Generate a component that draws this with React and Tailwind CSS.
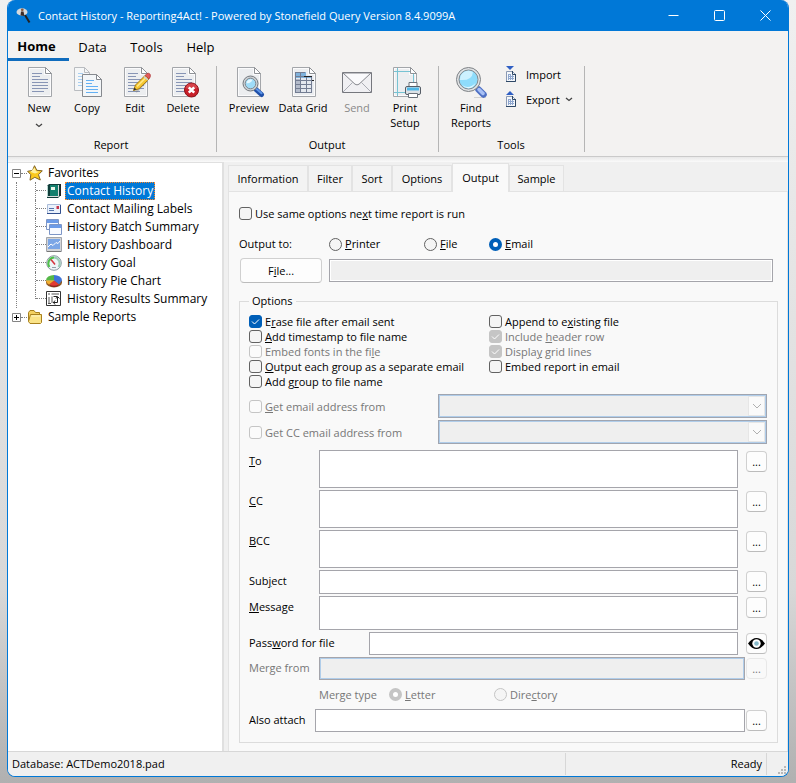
import { useState } from 'react';
import clsx from 'clsx';

/* ---------- Icons ---------- */

function Sheet({ x = 0, lines = true }) {
  return (
    <g transform={`translate(${x} 0)`}>
      <path d="M.5 .5H17.5L23.5 6.5V29.5H.5Z" fill="#fbfbfc" stroke="#a3a6aa" />
      <path d="M2 2H16V8H22V28H2Z" fill="#eceef0" />
      <path d="M17.5 .5V6.5H23.5Z" fill="#fff" stroke="#8f9296" />
      {lines && <path d="M4 6.5H14M4 9.5H12M4 12.5H20M4 15.5H20M4 18.5H20M4 21.5H20M4 24.5H16" stroke="#8795b5" />}
    </g>
  );
}

const Svg32 = ({ children }) => (
  <svg width="32" height="32" viewBox="0 0 32 32" fill="none" aria-hidden="true">{children}</svg>
);

const NewIcon = () => <Svg32><Sheet x={5} /></Svg32>;

const CopyIcon = () => (
  <Svg32>
    <g transform="translate(3 0)">
      <path d="M.5 .5H10.5L15.5 5.5V23.5H.5Z" fill="#f5f7f8" stroke="#b9bcc0" />
      <path d="M10.5 .5V5.5H15.5" stroke="#b9bcc0" />
      <path d="M4 6.5H9M4 9.5H11M4 12.5H11M4 15.5H11M4 18.5H11" stroke="#a9cff0" />
    </g>
    <g transform="translate(11 7)">
      <path d="M.5 .5H14.5L19.5 5.5V22.5H.5Z" fill="#f3f6f8" stroke="#85898e" />
      <path d="M14.5 .5V5.5H19.5Z" fill="#fff" stroke="#85898e" />
      <path d="M4 6.5H12M4 9.5H10M4 12.5H16M4 15.5H16M4 18.5H16" stroke="#63b0f3" />
    </g>
  </Svg32>
);

const EditIcon = () => (
  <Svg32>
    <Sheet x={5} />
    <path d="M17 25L28 14" stroke="#777" strokeWidth="2" opacity=".4" />
    <path d="M14.5 23.5L16.5 18L26 8.5L30 12L20 21.8Z" fill="#f6c832" stroke="#a77b12" />
    <path d="M18 19.5L27.5 10" stroke="#ffe98a" strokeWidth="1.5" />
    <path d="M26 8.5L28 6.5Q30 5.5 31.3 7.5Q32 9.5 30 12Z" fill="#e25b5b" stroke="#a33" strokeWidth=".7" />
    <path d="M25 9.5L29 13" stroke="#c7ced6" strokeWidth="1.5" />
    <path d="M14.5 23.5L15.5 20.5L17.5 22.5Z" fill="#333" />
  </Svg32>
);

const DeleteIcon = () => (
  <Svg32>
    <Sheet x={5} />
    <circle cx="24.5" cy="23" r="7" fill="#c8202a" stroke="#8d1118" />
    <path d="M18.5 21A6.3 6.3 0 0 1 30.5 21Q24 23 18.5 21Z" fill="#e05a5f" opacity=".6" />
    <path d="M21.8 20.3L27.2 25.7M27.2 20.3L21.8 25.7" stroke="#fff" strokeWidth="2.6" />
  </Svg32>
);

const PreviewIcon = () => (
  <Svg32>
    <Sheet x={4} lines={false} />
    <path d="M23 22.5L28.5 27.5" stroke="#1f4fa8" strokeWidth="5" strokeLinecap="round" />
    <path d="M23.500 22L28.500 26.300" stroke="#5d95e8" strokeWidth="2" strokeLinecap="round" />
    <circle cx="17.500" cy="16.500" r="7.500" fill="#cfd3d7" stroke="#73787d" />
    <circle cx="17.500" cy="16.500" r="5.300" fill="#9fdcf8" stroke="#7d858c" />
    <path d="M13.500 16A4.200 4.200 0 0 1 19.500 12.800Q17.500 17 13.500 16Z" fill="#e6f8ff" />
  </Svg32>
);

const DataGridIcon = () => (
  <Svg32>
    <Sheet x={5} lines={false} />
    <g transform="translate(1 0)">
      <path d="M7 6H18V8H25V26H7Z" fill="#e4e8ee" />
      <path d="M7 5H18V9H24V11H7Z" fill="#7fb2dc" />
      <path d="M7 12H12V26H7Z" fill="#b4bccb" />
      <path d="M7.5 5.5H17M7 9.5H24M7 13.5H24.5M7 17.5H24M7 21.5H24M7 25.5H24M7.5 5V26M12.5 5V26M18.5 9V26M23.5 9V26" stroke="#737d92" />
      <path d="M16 9.5H24M24 13.5H26" stroke="#222" />
    </g>
  </Svg32>
);

const SendIcon = () => (
  <Svg32>
    <path d="M1.5 5.5H30.5V25.5H1.5Z" fill="#f0f0f3" stroke="#75777d" />
    <path d="M2 25L11.5 15.5M30 25L20.5 15.5" stroke="#aaacb4" />
    <path d="M2 6L14 17.2Q16 18.6 18 17.2L30 6Z" fill="#fafafc" stroke="#85878d" />
  </Svg32>
);

const PrintSetupIcon = () => (
  <Svg32>
    <Sheet x={4} lines={false} />
    <path d="M8.5 1V29M24.5 7V15M5 4.5H21M5 25.5H18" stroke="#77c3d3" />
    <path d="M20 15.5H28V20H20Z" fill="#fff" stroke="#6b737b" />
    <rect x="16.5" y="19.5" width="15" height="8" rx="1.5" fill="#dde2e6" stroke="#555d66" />
    <path d="M18 20.5H30V23.5H18Z" fill="#4fb7e6" />
    <path d="M19.5 26.5H28.5V30.5H19.5Z" fill="#fff" stroke="#6b737b" />
  </Svg32>
);

const FindIcon = () => (
  <Svg32>
    <path d="M19 30.5H31" stroke="#bbb" opacity=".6" />
    <path d="M23.5 22.5L28.5 27.5" stroke="#4e70c4" strokeWidth="6.5" strokeLinecap="round" />
    <path d="M24 22.5L28 26.5" stroke="#a7c0f5" strokeWidth="3.5" strokeLinecap="round" />
    <circle cx="13.5" cy="12.5" r="12" fill="#dfe2e4" stroke="#7d8185" />
    <circle cx="13.5" cy="12.5" r="9.5" fill="#8edcfb" stroke="#83898e" />
    <path d="M5 13A8.5 8.5 0 0 1 18 5.2Q17 14 5 13Z" fill="#cdf1ff" />
    <path d="M7 18Q14 23 20.5 16Q18 21.5 13 21.3Q9 21 7 18Z" fill="#e0f7ff" />
  </Svg32>
);

function TransferIcon({ up }) {
  return (
    <svg width="12" height="17" viewBox="0 0 12 17" fill="none" aria-hidden="true">
      <path d={up ? 'M1 4L5 0L9 4Z' : 'M1 0H9L5 4Z'} fill="#2f5fc4" />
      <path d="M1.5 5.5H7.5L10.5 8.5V15.5H1.5Z" fill="#f4f7fb" stroke="#8b9ab4" />
      <path d="M7.5 5V8.5H11M10.5 8V15.5H1" stroke="#2e4866" />
      <path d="M3.5 8V14M5.5 8V14M7.5 9V14M3 8.5H6M3 10.5H9M3 12.5H9" stroke="#8fa7cf" />
    </svg>
  );
}

const Chevron = ({ className }) => (
  <svg width="8" height="5" viewBox="0 0 8 5" fill="none" aria-hidden="true" className={className}>
    <path d="M1 1L4 3.5L7 1" stroke="#444" strokeWidth="1.3" />
  </svg>
);

const Svg16 = ({ children }) => (
  <svg width="16" height="16" viewBox="0 0 16 16" fill="none" aria-hidden="true" className="shrink-0">{children}</svg>
);

const StarIcon = () => (
  <Svg16>
    <path d="M7.5 .7L9.8 5.3L15.3 5.8L11.5 9.7L13.3 15L7.8 12.3L3 15.2L3.8 9.7L.6 6.3L5.5 5.4Z" fill="#fbc91e" stroke="#806427" />
    <path d="M7.5 2.5L9 6.2L12.5 6.7L8 8.5L3.5 7Z" fill="#fff0a0" />
  </Svg16>
);

const FolderIcon = () => (
  <Svg16>
    <path d="M1.5 12.5V3.5L3 1.5H7L8.5 3.5H12.5V5" fill="#f3d060" stroke="#a8801d" />
    <path d="M3.5 5.5H14.5V13.5L13.5 14.5H3L1.5 12.5Z" fill="#fae388" stroke="#a8801d" />
    <path d="M4.5 7H13" stroke="#fff6c4" />
  </Svg16>
);

const BookIcon = () => (
  <Svg16>
    <path d="M1 3L3 1H14V13L12 15H1Z" fill="#103d39" />
    <path d="M4 2H12V13H4Z" fill="#14806e" />
    <path d="M1.5 3V14" stroke="#b8d8d2" />
    <path d="M5 4H9V7H5Z" fill="#e8f4e8" />
    <path d="M12.5 2V13.5H2" stroke="#dcdcdc" />
    <path d="M14.5 1V13" stroke="#222" />
  </Svg16>
);

const MailIcon = () => (
  <Svg16>
    <path d="M1.5 3.5H14.5V12.5H1.5Z" fill="#eaf1fb" stroke="#a9bbd8" />
    <path d="M1 12.5H14.5V4" stroke="#33508f" />
    <path d="M3 7.5H8M3 9.5H8" stroke="#5474ab" />
    <path d="M10.5 5H13V8H10.5Z" fill="#c7364b" />
  </Svg16>
);

const WindowsIcon = () => (
  <Svg16>
    <path d="M.5 .5H12.5V10.5H.5Z" fill="#f5f9ff" stroke="#7d96c6" />
    <path d="M1 1H12V4H1Z" fill="#6d9ce8" />
    <path d="M3.5 5.5H15.5V15.5H3.5Z" fill="#f8faff" stroke="#7d96c6" />
    <path d="M4 6H15V9H4Z" fill="#6d9ce8" />
  </Svg16>
);

const DashboardIcon = () => (
  <Svg16>
    <path d="M.5 .5H15.5V14.5H.5Z" fill="#d2d4d8" stroke="#a2a5aa" />
    <path d="M2 2H14V12H2Z" fill="#7ba6e6" />
    <path d="M2 10L5 7L7 8.5L10 5.5L12 6.5L14 4" stroke="#fff" />
    <path d="M1 14.5H15" stroke="#777" />
  </Svg16>
);

const GaugeIcon = () => (
  <Svg16>
    <circle cx="8" cy="8" r="7.3" fill="#edf4f7" stroke="#8797a0" />
    <path d="M3.5 12A6 6 0 0 1 8 2.5" stroke="#4fc04a" strokeWidth="2" />
    <path d="M8 2.5A6 6 0 0 1 12.5 12" stroke="#9ccdb8" strokeWidth="2" />
    <path d="M5 4.5L9 9.5" stroke="#d5333c" strokeWidth="1.5" />
    <path d="M6 12.5H10" stroke="#8fa0a8" />
  </Svg16>
);

const PieIcon = () => (
  <Svg16>
    <path d="M0 7.5V9.5A8 5 0 0 0 16 9.5V7.5Z" fill="#8f5a22" />
    <path d="M4 11V12.5Q8 15.500 12.500 12.500V11Z" fill="#8f2022" />
    <path d="M8 7.500L0 7.500A8 5.500 0 0 1 8 2Z" fill="#55b848" />
    <path d="M8 7.500V2A8 5.500 0 0 1 16 7.500L13 11.500Z" fill="#3f74d8" />
    <path d="M8 7.500L13 11.500A8 5 0 0 1 3 11.500Z" fill="#e23b32" />
    <path d="M8 7.500L3 11.500A8 5 0 0 1 0 7.500Z" fill="#f2ae30" />
  </Svg16>
);

const CrossTabIcon = () => (
  <Svg16>
    <path d="M.5 .5H14.5V14.5H.5Z" fill="#fff" stroke="#333" />
    <path d="M3 2V4M3 6V12M5.5 3H13M6 5.500V12M2 12.500H5" stroke="#555" />
    <path d="M7 11.500H11.500V6M10 7.500L11.500 5.500L13.500 7.500M9 9.500L7.500 11.500L9 13.500M7.500 5.500H11" stroke="#222" />
  </Svg16>
);

const EyeIcon = () => (
  <svg width="17" height="13" viewBox="0 0 17 13" fill="none" aria-hidden="true" className="shrink-0">
    <path d="M0 6.5Q4 1 8.5 1Q13 1 17 6.5Q13 12 8.5 12Q4 12 0 6.5Z" fill="#000" />
    <circle cx="8.5" cy="6.5" r="4.2" fill="#fff" />
    <circle cx="8.5" cy="6.5" r="2.3" fill="#86b9c9" />
  </svg>
);

const AppIcon = () => (
  <Svg16>
    <path d="M9 7L13.5 14.5" stroke="#222" strokeWidth="2" />
    <ellipse cx="6" cy="4" rx="5.5" ry="3.7" fill="#d6d9dc" />
    <path d="M4.5 7.5L5 3.5H7.5L8.5 8Z" fill="#3c2b27" />
    <circle cx="6.3" cy="1.8" r="1.4" fill="#8b5a40" />
  </Svg16>
);

/* ---------- Small controls ---------- */

function Check({ label, checked, disabled }) {
  return (
    <label className={clsx('flex h-[15px] items-center gap-[3px] leading-[15px] whitespace-nowrap', disabled && 'text-[#777]')}>
      <span className="grid shrink-0">
        <input
          type="checkbox"
          defaultChecked={checked}
          disabled={disabled}
          className="peer col-start-1 row-start-1 size-[13px] appearance-none rounded-[3px] border border-[#626262] bg-[#f5f5f5] checked:border-[#005fb8] checked:bg-[#005fb8] disabled:border-[#c5c5c5] disabled:bg-[#fbfbfb] disabled:checked:bg-[#c5c5c5]"
        />
        <svg width="13" height="13" viewBox="0 0 13 13" fill="none" aria-hidden="true" className="pointer-events-none invisible col-start-1 row-start-1 peer-checked:visible">
          <path d="M3 6.5L5.5 9L10 4.5" stroke="#fff" />
        </svg>
      </span>
      <span>{label}</span>
    </label>
  );
}

function Radio({ name, label, checked, disabled, className }) {
  return (
    <label className={clsx('flex items-center gap-[3px] whitespace-nowrap', disabled && 'text-[#777]', className)}>
      <input
        type="radio"
        name={name}
        defaultChecked={checked}
        disabled={disabled}
        className="size-[13px] shrink-0 appearance-none rounded-full border border-[#626262] bg-[#f5f5f5] checked:border-4 checked:border-[#005fb8] checked:bg-white disabled:border-[#c5c5c5]"
      />
      <span>{label}</span>
    </label>
  );
}

function SourceSelect({ label }) {
  return (
    <div className="grid min-w-0 flex-1">
      <select
        disabled
        aria-label={label}
        className="col-start-1 row-start-1 h-6 w-full appearance-none border border-[#a0a5b0] bg-[#efefef] opacity-100 shadow-[inset_0_0_0_1px_#b0cdea]"
      />
      <span className="pointer-events-none col-start-1 row-start-1 mr-[2px] flex h-5 w-[17px] items-center justify-center self-center justify-self-end border border-[#e6e6e6] bg-[#fafafa]">
        <svg width="10" height="6" viewBox="0 0 10 6" fill="none" aria-hidden="true">
          <path d="M1 1L5 5L9 1" stroke="#b0b0b0" />
        </svg>
      </span>
    </div>
  );
}

function SmallButton({ children = '...', className, ...rest }) {
  return (
    <button
      type="button"
      className={clsx('mt-px flex h-[21px] w-[21px] shrink-0 items-center justify-center rounded-[4px] border border-[#d0d0d0] border-b-[#bcbcbc] bg-[#fdfdfd] disabled:border-[#e8e8e8] disabled:bg-[#f9f9f9] disabled:text-[#777]', className)}
      {...rest}
    >
      {children}
    </button>
  );
}

const box = 'min-w-0 flex-1 resize-none border border-[#a5a5ab] bg-white px-1';

function Field({ id, label, rows, labelWidth = 'w-[70px]', height = 'h-[23px]', gap = 'ml-2', disabled, button, type = 'text' }) {
  return (
    <div className="flex items-start">
      <label htmlFor={id} className={clsx('shrink-0 pt-[3px] whitespace-nowrap', labelWidth, disabled && 'text-[#777]')}>
        {label}
      </label>
      {rows ? (
        <textarea id={id} className={clsx(box, height)} />
      ) : (
        <input
          id={id}
          type={type}
          disabled={disabled}
          className={clsx(box, height, 'disabled:bg-[#efefef] disabled:shadow-[inset_0_0_0_1px_#b0cdea]')}
        />
      )}
      {button ?? <SmallButton disabled={disabled} aria-label={`Choose ${id}`} className={gap} />}
    </div>
  );
}

function RibbonButton({ icon, label, width = 'w-12', disabled, menu }) {
  return (
    <button
      type="button"
      disabled={disabled}
      className={clsx('mt-px flex shrink-0 flex-col items-center leading-[15px] disabled:text-[#8a8a8a]', width)}
    >
      {icon}
      <span className="mt-px">{label}</span>
      {menu && <Chevron className="mt-2" />}
    </button>
  );
}

function RibbonGroup({ title, children }) {
  return (
    <section className="mr-2 flex flex-col border-r border-[#b5b5b5] pr-[9px]">
      <div className="flex flex-1 items-start">{children}</div>
      <h2 className="text-center leading-[14px]">{title}</h2>
    </section>
  );
}

/* ---------- Page ---------- */

const favorites = [
  { name: 'Contact History', icon: <BookIcon /> },
  { name: 'Contact Mailing Labels', icon: <MailIcon /> },
  { name: 'History Batch Summary', icon: <WindowsIcon /> },
  { name: 'History Dashboard', icon: <DashboardIcon /> },
  { name: 'History Goal', icon: <GaugeIcon /> },
  { name: 'History Pie Chart', icon: <PieIcon /> },
  { name: 'History Results Summary', icon: <CrossTabIcon /> },
];

const tabs = [
  { name: 'Information', width: 'w-20' },
  { name: 'Filter', width: 'w-11' },
  { name: 'Sort', width: 'w-10' },
  { name: 'Options', width: 'w-[60px]' },
  { name: 'Output', width: 'w-[57px]' },
  { name: 'Sample', width: 'w-[55px]' },
];

function TitleBar() {
  return (
    <header className="flex h-[31px] items-center bg-[#0078d7] pl-2 text-white">
      <AppIcon />
      <h1 className="ml-[6px] flex-1 truncate">Contact History - Reporting4Act! - Powered by Stonefield Query Version 8.4.9099A</h1>
      {[
        ['Minimize', 'M.5 5.5H10.5'],
        ['Maximize', 'M1.5 .5H9.5Q10.5 .5 10.5 1.5V9.5Q10.5 10.5 9.5 10.5H1.5Q.5 10.5 .5 9.5V1.5Q.5 .5 1.5 .5Z'],
        ['Close', 'M.5 .5L10.5 10.5M10.5 .5L.5 10.5'],
      ].map(([name, d]) => (
        <button key={name} type="button" aria-label={name} className="flex h-full w-[46px] items-center justify-center">
          <svg width="11" height="11" viewBox="0 0 11 11" fill="none" aria-hidden="true">
            <path d={d} stroke="#fff" />
          </svg>
        </button>
      ))}
    </header>
  );
}

function Ribbon() {
  return (
    <div className="border-b border-[#cacaca] bg-[#f3f2f1]">
      <nav className="flex h-[30px] text-[13px]">
        <button type="button" className="w-[61px] border-b-[3px] border-[#0f6cbd] pt-[3px] pr-1 font-bold">Home</button>
        <button type="button" className="w-[47px] pt-px">Data</button>
        <button type="button" className="w-[61px] pt-px">Tools</button>
        <button type="button" className="w-[47px] pt-px">Help</button>
      </nav>
      <div className="flex h-[95px] pt-[5px] pb-1 pl-[7px]">
        <RibbonGroup title="Report">
          <RibbonButton icon={<NewIcon />} label="New" menu />
          <RibbonButton icon={<CopyIcon />} label="Copy" />
          <RibbonButton icon={<EditIcon />} label="Edit" />
          <RibbonButton icon={<DeleteIcon />} label="Delete" />
        </RibbonGroup>
        <RibbonGroup title="Output">
          <RibbonButton icon={<PreviewIcon />} label="Preview" />
          <RibbonButton icon={<DataGridIcon />} label="Data Grid" width="w-15" />
          <RibbonButton icon={<SendIcon />} label="Send" disabled />
          <RibbonButton icon={<PrintSetupIcon />} label="Print Setup" />
        </RibbonGroup>
        <RibbonGroup title="Tools">
          <RibbonButton icon={<FindIcon />} label="Find Reports" />
          <div className="flex w-20 flex-col gap-2 pl-[10px]">
            <button type="button" className="flex h-[17px] items-center gap-[9px]"><TransferIcon />Import</button>
            <button type="button" className="flex h-[17px] items-center gap-[9px]">
              <TransferIcon up />Export<Chevron className="-ml-1 shrink-0" />
            </button>
          </div>
        </RibbonGroup>
      </div>
    </div>
  );
}

function Expander({ open }) {
  return (
    <svg width="9" height="9" viewBox="0 0 9 9" fill="none" aria-hidden="true" className="shrink-0">
      <path d="M.5 .5H8.5V8.5H.5Z" fill="#fff" stroke="#848484" />
      <path d={open ? 'M2 4.5H7' : 'M2 4.5H7M4.5 2V7'} stroke="#000" />
    </svg>
  );
}

function ReportTree() {
  const [selected, setSelected] = useState('Contact History');
  return (
    <aside className="w-[216px] shrink-0 border-t border-r-2 border-[#e0e0e0] bg-white pt-px text-[12px]">
      <div className="flex h-[18px] items-center pl-1">
        <Expander open />
        <span className="w-[6px] border-b border-dotted border-[#808080]" />
        <StarIcon />
        <span className="ml-[5px]">Favorites</span>
      </div>
      <ul>
        {favorites.map(({ name, icon }, i) => (
          <li key={name} className="flex h-[18px] items-center pl-2">
            <span className="h-full w-[19px] shrink-0 border-l border-dotted border-[#808080]" />
            <span className={clsx('w-[11px] shrink-0 self-start border-l border-dotted border-[#808080]', i === favorites.length - 1 ? 'h-[9px]' : 'h-full')}>
              <span className="block h-[9px] border-b border-dotted border-[#808080]" />
            </span>
            {icon}
            <button
              type="button"
              onClick={() => setSelected(name)}
              className={clsx(
                'ml-[3px] h-[18px] border border-dotted px-px leading-4 whitespace-nowrap',
                selected === name ? 'border-[#ff8728] bg-[#0078d7] text-white' : 'border-transparent',
              )}
            >
              {name}
            </button>
          </li>
        ))}
      </ul>
      <div className="flex h-[18px] items-center pl-1">
        <Expander />
        <span className="w-[6px] border-b border-dotted border-[#808080]" />
        <FolderIcon />
        <span className="ml-[5px]">Sample Reports</span>
      </div>
    </aside>
  );
}

function OutputOptions() {
  return (
    <fieldset className="mt-[10px] min-w-0 border border-[#dcdcdc] pr-[10px] pb-[10px] pl-[9px]">
      <legend className="px-[3px]">Options</legend>
      <div className="flex pt-[5px]">
        <div className="w-60 shrink-0">
          <Check checked label={<>E<u>r</u>ase file after email sent</>} />
          <Check label={<><u>A</u>dd timestamp to file name</>} />
          <Check disabled label={<>Embed fonts in the fi<u>l</u>e</>} />
          <Check label={<><u>O</u>utput each group as a separate email</>} />
          <Check label={<>Add g<u>r</u>oup to file name</>} />
        </div>
        <div>
          <Check label={<>Append to e<u>x</u>isting file</>} />
          <Check checked disabled label={<>Include <u>h</u>eader row</>} />
          <Check checked disabled label={<>Displa<u>y</u> grid lines</>} />
          <Check label="Embed report in email" />
        </div>
      </div>

      <div className="mt-[5px] flex flex-col gap-[2px]">
        <div className="flex items-center">
          <div className="w-[189px] shrink-0"><Check disabled label={<><u>G</u>et email address from</>} /></div>
          <SourceSelect label="Email address source" />
        </div>
        <div className="flex items-center">
          <div className="w-[189px] shrink-0"><Check disabled label="Get CC email address from" /></div>
          <SourceSelect label="CC email address source" />
        </div>
      </div>

      <div className="mt-[6px] flex flex-col gap-[2px]">
        <Field id="to" rows height="h-[38px]" label={<><u>T</u>o</>} />
        <Field id="cc" rows height="h-[38px]" label={<><u>C</u>C</>} />
        <Field id="bcc" rows height="h-[38px]" label={<><u>B</u>CC</>} />
        <Field id="subject" height="h-6" label={<>Sub<u>j</u>ect</>} />
        <Field id="message" rows height="h-[34px]" label={<><u>M</u>essage</>} />
        <Field
          id="password"
          type="password"
          labelWidth="w-[120px]"
          label={<>Pass<u>w</u>ord for file</>}
          button={<SmallButton aria-label="Show password" className="ml-2"><EyeIcon /></SmallButton>}
        />
        <Field id="merge-from" disabled gap="ml-px" label="Merge from" />
      </div>
      <div role="radiogroup" aria-label="Merge type" className="flex h-[29px] items-center pl-[70px] text-[#777]">
        <span className="w-[70px]">Merge type</span>
        <Radio name="merge" checked disabled className="w-[105px]" label={<><u>L</u>etter</>} />
        <Radio name="merge" disabled label={<>Dire<u>c</u>tory</>} />
      </div>
      <Field id="attach" labelWidth="w-[66px]" gap="ml-px" label="Also attach" />
    </fieldset>
  );
}

export default function App() {
  return (
    <div className="flex min-h-screen flex-col bg-linear-to-b from-[#f0f0f0] via-[#d8d8d8] via-75% to-[#b0b0b0] px-[7px] pb-[7px] font-['Open_Sans','Noto_Sans',sans-serif] text-[11px] leading-4 text-black">
      <div className="flex flex-1 flex-col overflow-hidden rounded-lg border border-t-0 border-[#0078d7] bg-[#f0f0f0]">
        <TitleBar />
        <Ribbon />
        <div className="h-[5px] bg-linear-to-b from-[#e8e8e8] to-[#fafafa]" />

        <main className="flex flex-1">
          <ReportTree />
          <div className="ml-1 flex min-w-0 flex-1 flex-col">
            <div role="tablist" className="flex h-[29px] items-end">
              {tabs.map(({ name, width }) => (
                <button
                  key={name}
                  type="button"
                  role="tab"
                  aria-selected={name === 'Output'}
                  className={clsx(
                    'shrink-0 border border-b-0 border-[#e3e3e3] whitespace-nowrap',
                    name === 'Output' ? 'z-10 -mb-px h-[29px] bg-[#f9f9f9] pb-px' : 'h-[26px] bg-[#f3f3f3]',
                    width,
                  )}
                >
                  {name}
                </button>
              ))}
            </div>
            <div role="tabpanel" className="flex-1 border border-b-0 border-[#e3e3e3] bg-[#f9f9f9] pt-[14px] pr-[9px] pb-2 pl-[10px]">
              <Check label={<>Use same options ne<u>x</u>t time report is run</>} />
              <div role="radiogroup" aria-label="Output to" className="mt-[15px] flex items-center">
                <span className="w-[90px]">Output to:</span>
                <Radio name="output" className="w-[95px]" label={<><u>P</u>rinter</>} />
                <Radio name="output" className="w-[65px]" label={<><u>F</u>ile</>} />
                <Radio name="output" checked label={<><u>E</u>mail</>} />
              </div>
              <div className="mt-[6px] flex items-center gap-[7px] pr-[5px] pl-px">
                <button type="button" className="h-[25px] w-[82px] rounded-[4px] border border-[#d0d0d0] border-b-[#bcbcbc] bg-[#fdfdfd]">
                  F<u>i</u>le...
                </button>
                <input aria-label="File name" disabled className="h-[23px] min-w-0 flex-1 border border-[#a5a5ab] bg-[#efefef] shadow-[inset_0_0_0_1px_#fff]" />
              </div>
              <OutputOptions />
            </div>
          </div>
        </main>

        <footer className="flex h-[25px] shrink-0 border-t border-[#d7d7d7] bg-[#f0f0f0]">
          <span className="flex flex-1 items-center pl-1">Database: ACTDemo2018.pad</span>
          <span className="my-px flex w-[202px] items-center justify-end border-x border-[#d7d7d7] pr-1">Ready</span>
          <span className="flex w-[21px] items-end justify-end">
            <svg width="10" height="10" viewBox="0 0 10 10" fill="#b8b8b8" aria-hidden="true">
              <path d="M6 0H8V2H6ZM3 3H5V5H3ZM6 3H8V5H6ZM0 6H2V8H0ZM3 6H5V8H3ZM6 6H8V8H6Z" />
            </svg>
          </span>
        </footer>
      </div>
    </div>
  );
}
